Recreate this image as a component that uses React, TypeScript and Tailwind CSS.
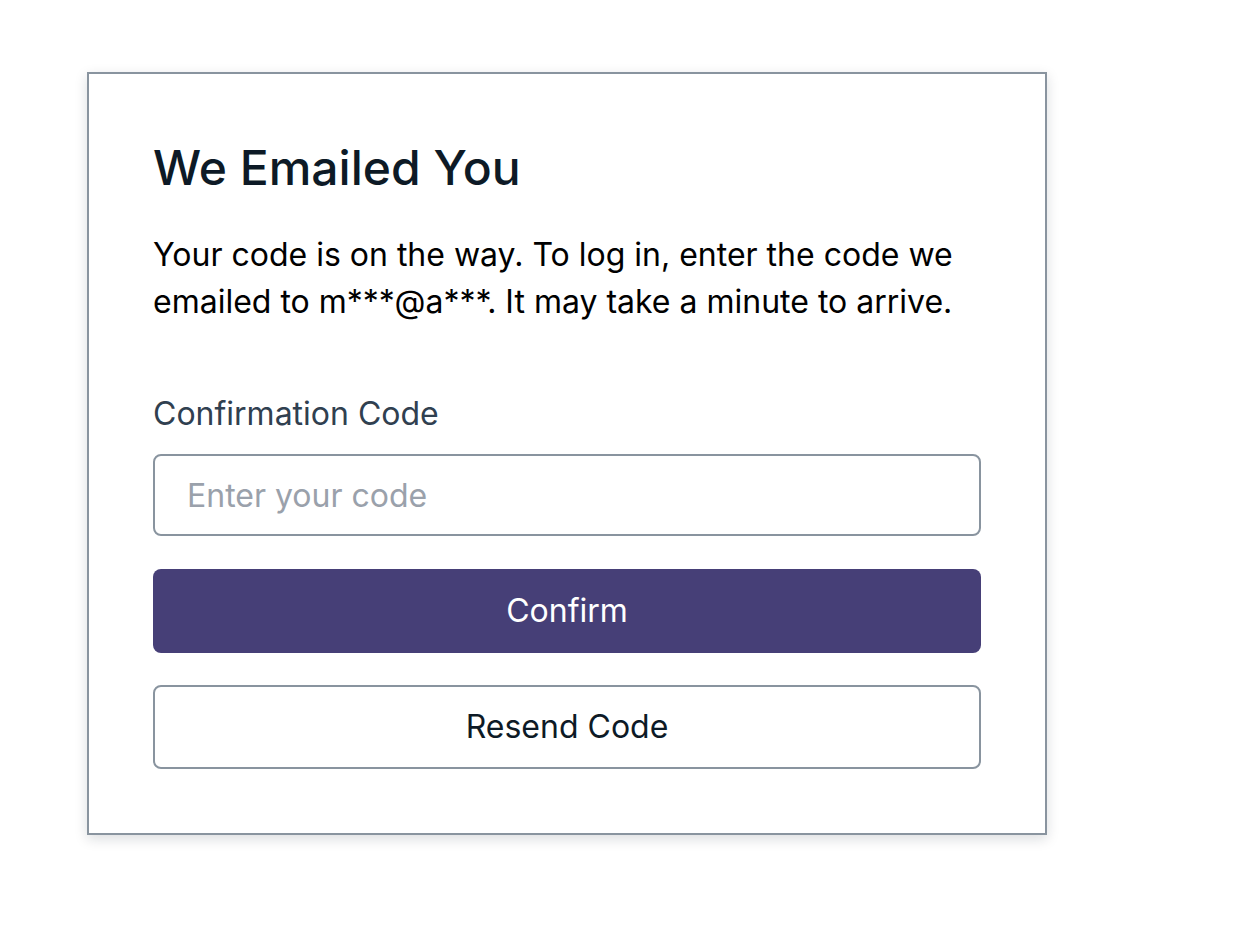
export default function App() {
  return (
    <div className="min-h-[940px] bg-white pl-[87px] pt-[72px]" style={{ fontFamily: "Inter, 'Noto Sans', sans-serif" }}>
      <div className="w-[960px] border-2 border-[#89949f] bg-white px-[64px] py-[64px] shadow-[0_4px_12px_rgba(13,26,38,0.15)]">
        <h3 className="text-[48px] leading-[60px] font-medium text-[#0d1a26]">We Emailed You</h3>
        <p className="mt-[33px] text-[32px] leading-[47px] text-black">
          Your code is on the way. To log in, enter the code we emailed to m***@a***. It may take a minute to arrive.
        </p>
        <form className="mt-[65px] flex flex-col">
          <label htmlFor="code" className="text-[32px] leading-[48px] text-[#304050]">
            Confirmation Code
          </label>
          <input
            id="code"
            placeholder="Enter your code"
            className="mt-[16px] h-[82px] w-full rounded-[8px] border-2 border-[#89949f] px-[32px] text-[32px] text-[#0d1a26] outline-none placeholder:text-[#9aa1ab]"
          />
          <button
            type="button"
            className="mt-[33px] h-[84px] w-full rounded-[8px] bg-[#463f77] text-[32px] font-normal text-white"
          >
            Confirm
          </button>
          <button
            type="button"
            className="mt-[32px] h-[84px] w-full rounded-[8px] border-2 border-[#89949f] bg-white text-[32px] font-normal text-[#0d1a26]"
          >
            Resend Code
          </button>
        </form>
      </div>
    </div>
  );
}
